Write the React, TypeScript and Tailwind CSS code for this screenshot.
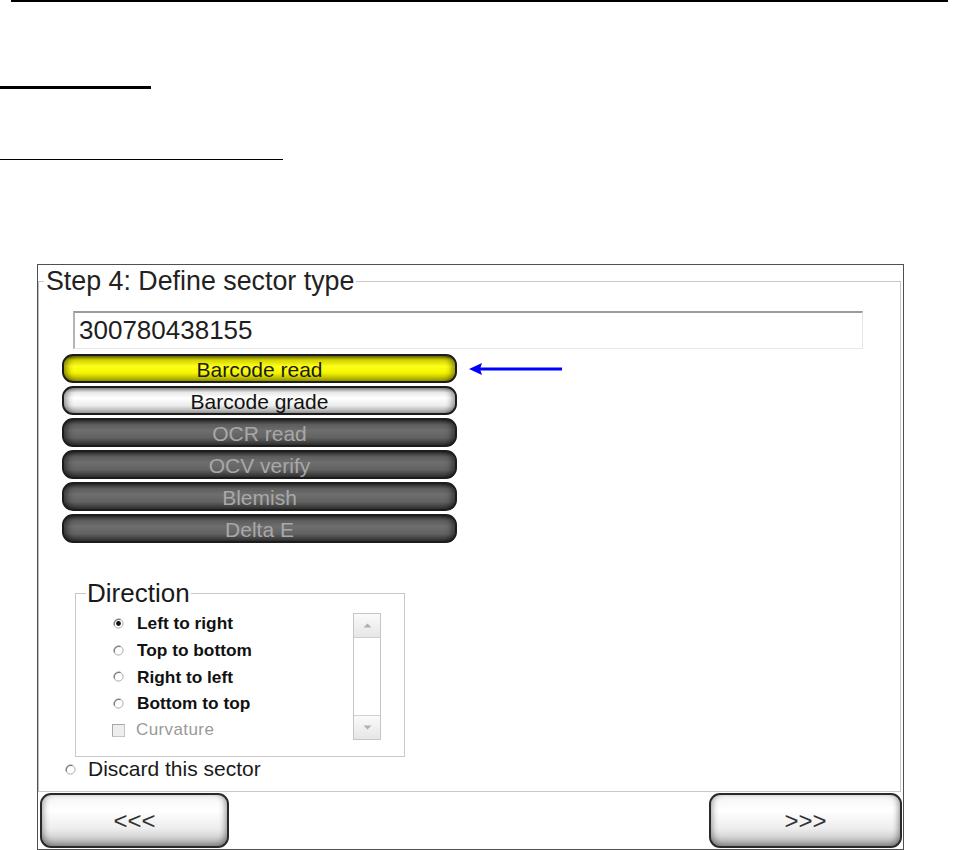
import React from "react";

const FONT = "font-['Liberation_Sans',Arial,Helvetica,sans-serif]";

function Radio({ checked = false }: { checked?: boolean }) {
  return (
    <svg width="11" height="11" viewBox="0 0 11 11" className="shrink-0">
      <circle cx="5.5" cy="5.5" r="4.6" fill="#ffffff" stroke="#a9a9a9" strokeWidth="1" />
      <path d="M1.6 7.5 A4.6 4.6 0 0 1 7.5 1.6" fill="none" stroke="#7e7e7e" strokeWidth="1.2" />
      {checked && <circle cx="5.5" cy="5.5" r="2.4" fill="#111" />}
    </svg>
  );
}

function SectorButton({ label, kind }: { label: string; kind: "yellow" | "white" | "gray" }) {
  const base =
    "h-[29px] w-[395px] rounded-[11px] border-2 border-[#1c1c1c] flex items-center justify-center text-[21px] leading-[25px] pt-[1px]";
  const styles: Record<string, string> = {
    yellow:
      "bg-[linear-gradient(to_bottom,#6a6a00_0%,#d2d200_16%,#ffff1a_42%,#f4f400_68%,#9c9c00_100%)] shadow-[inset_7px_0_6px_-4px_rgba(0,0,0,0.45),inset_-7px_0_6px_-4px_rgba(0,0,0,0.45)] text-[#1a1a1a]",
    white:
      "bg-[linear-gradient(to_bottom,#8c8c8c_0%,#e8e8e8_18%,#ffffff_40%,#ececec_70%,#a0a0a0_100%)] shadow-[inset_7px_0_6px_-4px_rgba(0,0,0,0.4),inset_-7px_0_6px_-4px_rgba(0,0,0,0.4)] text-[#111]",
    gray:
      "bg-[linear-gradient(to_bottom,#2f2f2f_0%,#5c5c5c_18%,#6e6e6e_42%,#636363_70%,#333333_100%)] shadow-[inset_7px_0_6px_-4px_rgba(0,0,0,0.5),inset_-7px_0_6px_-4px_rgba(0,0,0,0.5)] text-[#a8a8a8]",
  };
  return <div className={`${base} ${styles[kind]}`}>{label}</div>;
}

function NavButton({ label, w }: { label: string; w: string }) {
  return (
    <div
      className={`${w} h-[55px] rounded-[11px] border-2 border-[#2a2a2a] bg-[linear-gradient(to_bottom,#f4f4f4_0%,#ffffff_30%,#eeeeee_65%,#bdbdbd_100%)] shadow-[inset_0_-4px_6px_rgba(0,0,0,0.25),inset_5px_0_6px_-3px_rgba(0,0,0,0.2),inset_-5px_0_6px_-3px_rgba(0,0,0,0.25)] flex items-center justify-center text-[24px] leading-none text-[#333]`}
    >
      {label}
    </div>
  );
}

function DirRow({ label, checked = false }: { label: string; checked?: boolean }) {
  return (
    <div className="flex items-center h-[26.75px] pl-[37px]">
      <Radio checked={checked} />
      <span className="ml-[13px] text-[17.3px] font-bold leading-[26.75px] text-[#111]">{label}</span>
    </div>
  );
}

export default function App() {
  return (
    <div className={`${FONT} w-[955px] h-[850px] bg-white overflow-hidden relative`}>
      {/* header rules */}
      <div className="ml-[11px] w-[937px] h-[1.5px] bg-black" />
      <div className="mt-[84.5px] w-[151px] h-[3px] bg-black" />
      <div className="mt-[70px] w-[283px] h-[1px] bg-black" />

      {/* main panel */}
      <div className="mt-[104px] ml-[37px] w-[867px] h-[586px] border border-[#505050] flex flex-col">
        <fieldset className="mt-[1px] mr-[2px] h-[526px] border border-[#c8c8c8] border-l-[#bdbdbd]">
          <legend className="ml-[5px] px-[2px] text-[26.8px] leading-[30px] text-[#222]">
            Step 4: Define sector type
          </legend>

          <div className="mt-[15px] ml-[34px] w-[790px] h-[38px] border-t-2 border-l-2 border-t-[#9c9c9c] border-l-[#b4b4b4] border-r border-b border-r-[#e4e4e4] border-b-[#e8e8e8] flex items-center pl-[4px] text-[26px] text-[#1e1e1e]">
            300780438155
          </div>

          <div className="mt-[5px] ml-[23px] flex flex-col gap-[3px]">
            <SectorButton label="Barcode read" kind="yellow" />
            <SectorButton label="Barcode grade" kind="white" />
            <SectorButton label="OCR read" kind="gray" />
            <SectorButton label="OCV verify" kind="gray" />
            <SectorButton label="Blemish" kind="gray" />
            <SectorButton label="Delta E" kind="gray" />
          </div>

          <fieldset className="mt-[35px] ml-[36px] w-[330px] h-[179px] border border-[#c8c8c8]">
            <legend className="ml-[10px] px-[1px] text-[26px] leading-[30px] text-[#1a1a1a]">Direction</legend>
            <div className="flex items-start">
              <div className="w-[277px] pt-[2px]">
                <DirRow label="Left to right" checked />
                <DirRow label="Top to bottom" />
                <DirRow label="Right to left" />
                <DirRow label="Bottom to top" />
                <div className="flex items-center h-[26.75px] pl-[36px]">
                  <div className="w-[13px] h-[13px] border border-[#c4c4c4] border-t-[#a8a8a8] border-l-[#a8a8a8] bg-[#eeeeee]" />
                  <span className="ml-[11px] text-[17px] leading-[26.75px] text-[#9a9a9a] tracking-[0.4px]">
                    Curvature
                  </span>
                </div>
              </div>
              <div className="mt-[5px] w-[28px] h-[127px] border border-[#c6c6c6] bg-white flex flex-col justify-between">
                <div className="h-[24px] border-b border-[#cfcfcf] bg-[linear-gradient(to_bottom,#fafafa,#e6e6e6)] flex items-center justify-center">
                  <svg width="9" height="5" viewBox="0 0 9 5">
                    <path d="M0.5 4.5 L4.5 0.5 L8.5 4.5 Z" fill="#b0b0b0" />
                  </svg>
                </div>
                <div className="h-[24px] border-t border-[#cfcfcf] bg-[linear-gradient(to_bottom,#fafafa,#e6e6e6)] flex items-center justify-center">
                  <svg width="9" height="5" viewBox="0 0 9 5">
                    <path d="M0.5 0.5 L4.5 4.5 L8.5 0.5 Z" fill="#b0b0b0" />
                  </svg>
                </div>
              </div>
            </div>
          </fieldset>

          <div className="ml-[26px] flex items-center h-[24px]">
            <Radio />
            <span className="ml-[12px] text-[21px] leading-[24px] text-[#1a1a1a]">Discard this sector</span>
          </div>
        </fieldset>

        <div className="mt-[1px] flex justify-between pl-[2px] pr-[1px]">
          <NavButton label="<<<" w="w-[189px]" />
          <NavButton label=">>>" w="w-[193px]" />
        </div>
      </div>

      {/* annotation arrow */}
      <svg className="absolute left-[466px] top-[361px]" width="100" height="16" viewBox="0 0 100 16">
        <path d="M3 8 L16 2 L14 8 L16 14 Z" fill="#0000ff" />
        <rect x="12" y="6.5" width="84" height="3" fill="#0000ff" />
      </svg>
    </div>
  );
}
